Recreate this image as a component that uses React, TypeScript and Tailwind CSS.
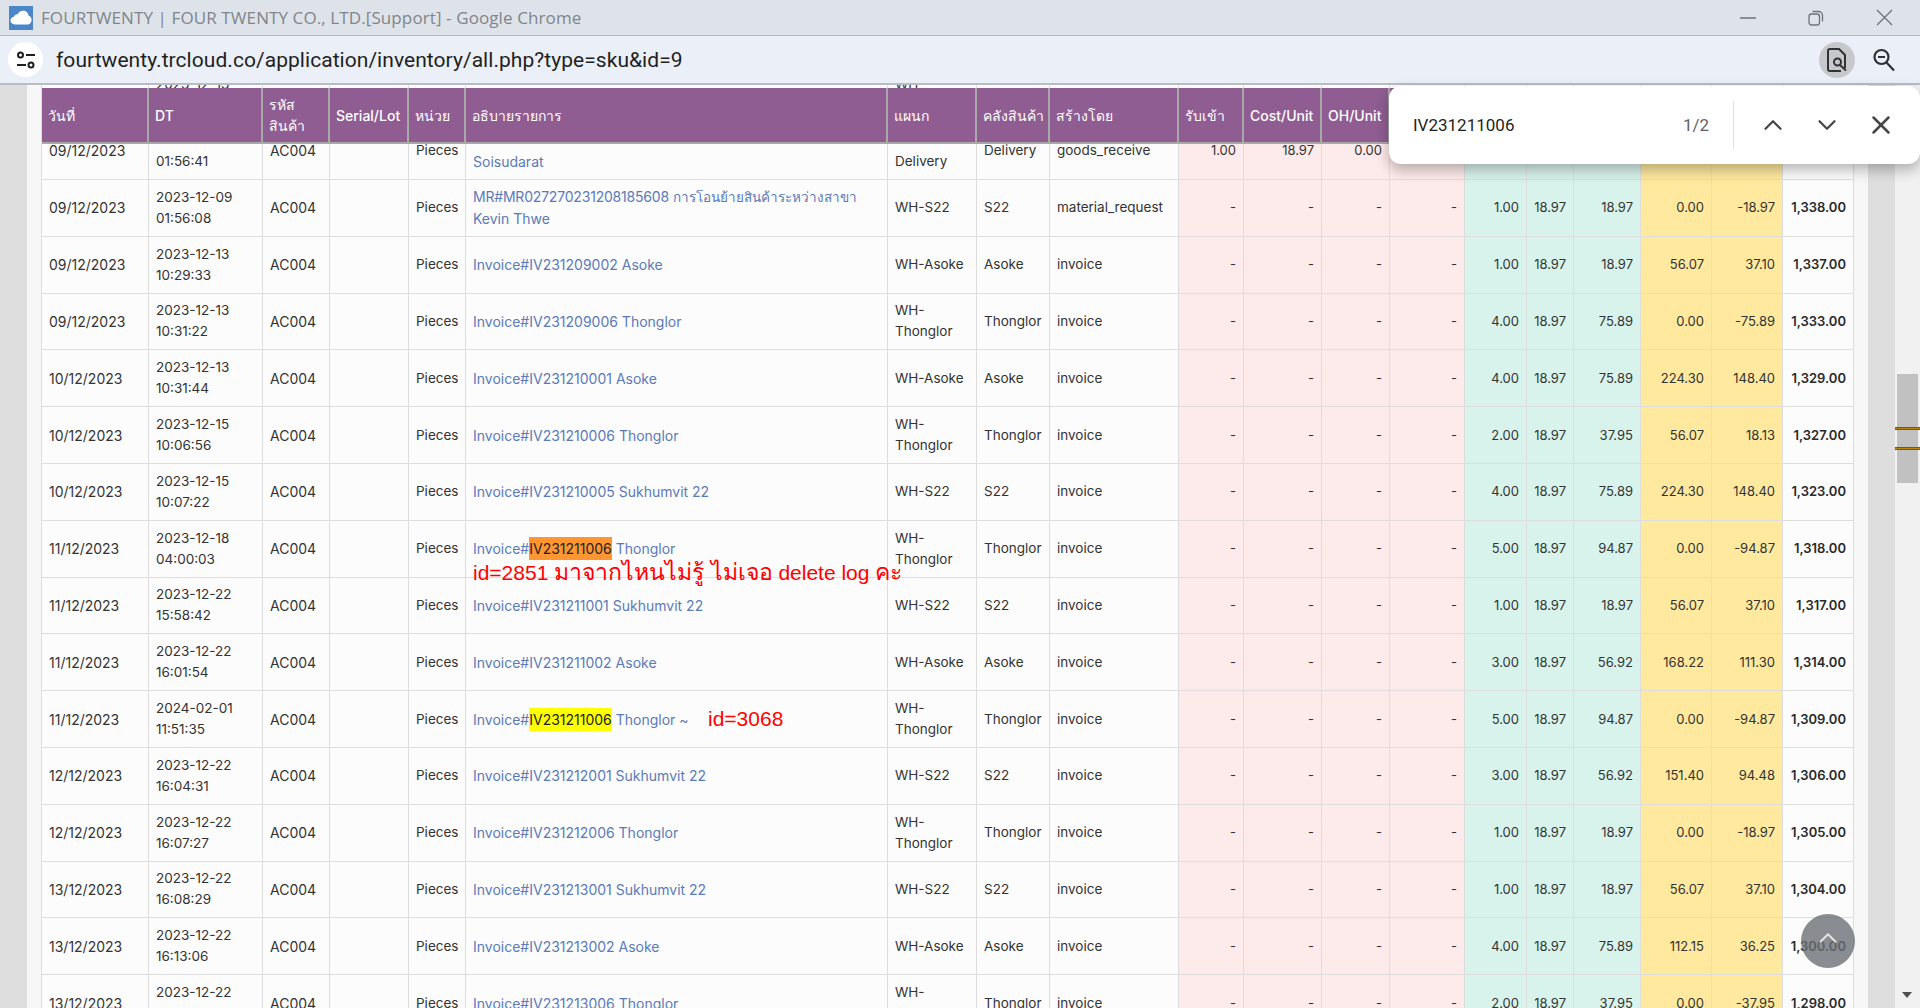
import { ChevronDown, ChevronUp, X } from 'lucide-react'

const gridCols =
  'grid grid-cols-[107px_114px_67px_79px_57px_422px_89px_73px_129px_65px_78px_68px_75px_62px_47px_67px_71px_71px_71px]'

type Row = {
  date: string
  dt: [string, string]
  desc: string
  dept: string
  wh: string
  by?: string
  nums: [string, string, string, string, string, string]
}

const rows: Row[] = [
  { date: '09/12/2023', dt: ['2023-12-09', '01:56:08'], desc: 'MR', dept: 'WH-S22', wh: 'S22', by: 'material_request', nums: ['1.00', '18.97', '18.97', '0.00', '-18.97', '1,338.00'] },
  { date: '09/12/2023', dt: ['2023-12-13', '10:29:33'], desc: 'Invoice#IV231209002 Asoke', dept: 'WH-Asoke', wh: 'Asoke', nums: ['1.00', '18.97', '18.97', '56.07', '37.10', '1,337.00'] },
  { date: '09/12/2023', dt: ['2023-12-13', '10:31:22'], desc: 'Invoice#IV231209006 Thonglor', dept: 'WH-Thonglor', wh: 'Thonglor', nums: ['4.00', '18.97', '75.89', '0.00', '-75.89', '1,333.00'] },
  { date: '10/12/2023', dt: ['2023-12-13', '10:31:44'], desc: 'Invoice#IV231210001 Asoke', dept: 'WH-Asoke', wh: 'Asoke', nums: ['4.00', '18.97', '75.89', '224.30', '148.40', '1,329.00'] },
  { date: '10/12/2023', dt: ['2023-12-15', '10:06:56'], desc: 'Invoice#IV231210006 Thonglor', dept: 'WH-Thonglor', wh: 'Thonglor', nums: ['2.00', '18.97', '37.95', '56.07', '18.13', '1,327.00'] },
  { date: '10/12/2023', dt: ['2023-12-15', '10:07:22'], desc: 'Invoice#IV231210005 Sukhumvit 22', dept: 'WH-S22', wh: 'S22', nums: ['4.00', '18.97', '75.89', '224.30', '148.40', '1,323.00'] },
  { date: '11/12/2023', dt: ['2023-12-18', '04:00:03'], desc: 'ORANGE', dept: 'WH-Thonglor', wh: 'Thonglor', nums: ['5.00', '18.97', '94.87', '0.00', '-94.87', '1,318.00'] },
  { date: '11/12/2023', dt: ['2023-12-22', '15:58:42'], desc: 'Invoice#IV231211001 Sukhumvit 22', dept: 'WH-S22', wh: 'S22', nums: ['1.00', '18.97', '18.97', '56.07', '37.10', '1,317.00'] },
  { date: '11/12/2023', dt: ['2023-12-22', '16:01:54'], desc: 'Invoice#IV231211002 Asoke', dept: 'WH-Asoke', wh: 'Asoke', nums: ['3.00', '18.97', '56.92', '168.22', '111.30', '1,314.00'] },
  { date: '11/12/2023', dt: ['2024-02-01', '11:51:35'], desc: 'YELLOW', dept: 'WH-Thonglor', wh: 'Thonglor', nums: ['5.00', '18.97', '94.87', '0.00', '-94.87', '1,309.00'] },
  { date: '12/12/2023', dt: ['2023-12-22', '16:04:31'], desc: 'Invoice#IV231212001 Sukhumvit 22', dept: 'WH-S22', wh: 'S22', nums: ['3.00', '18.97', '56.92', '151.40', '94.48', '1,306.00'] },
  { date: '12/12/2023', dt: ['2023-12-22', '16:07:27'], desc: 'Invoice#IV231212006 Thonglor', dept: 'WH-Thonglor', wh: 'Thonglor', nums: ['1.00', '18.97', '18.97', '0.00', '-18.97', '1,305.00'] },
  { date: '13/12/2023', dt: ['2023-12-22', '16:08:29'], desc: 'Invoice#IV231213001 Sukhumvit 22', dept: 'WH-S22', wh: 'S22', nums: ['1.00', '18.97', '18.97', '56.07', '37.10', '1,304.00'] },
  { date: '13/12/2023', dt: ['2023-12-22', '16:13:06'], desc: 'Invoice#IV231213002 Asoke', dept: 'WH-Asoke', wh: 'Asoke', nums: ['4.00', '18.97', '75.89', '112.15', '36.25', '1,300.00'] },
  { date: '13/12/2023', dt: ['2023-12-22', '16:14:20'], desc: 'Invoice#IV231213006 Thonglor', dept: 'WH-Thonglor', wh: 'Thonglor', nums: ['2.00', '18.97', '37.95', '0.00', '-37.95', '1,298.00'] },
]

function Cell({ children, className = '' }: { children?: React.ReactNode; className?: string }) {
  return (
    <div className={`relative flex items-center border-r border-b border-[#dddddd] px-[7px] ${className}`}>
      {children}
    </div>
  )
}

function Num({ children, className }: { children?: React.ReactNode; className: string }) {
  return <Cell className={`justify-end text-right text-[13px] ${className}`}>{children}</Cell>
}

function Desc({ desc }: { desc: string }) {
  if (desc === 'MR') {
    return (
      <div className="text-[#5b7ab8] text-[14px]">
        <div className="whitespace-nowrap">
          <span className="tracking-[-0.2px]">MR#MR027270231208185608</span>{' '}
          <span className="text-[13.5px]">การโอนย้ายสินค้าระหว่างสาขา</span>
        </div>
        <div>Kevin Thwe</div>
      </div>
    )
  }
  if (desc === 'ORANGE') {
    return (
      <>
        <div className="text-[#5b7ab8] text-[14px] whitespace-nowrap">
          Invoice#<span className="bg-[#ff9632] text-[#222222] py-[3px]">IV231211006</span> Thonglor
        </div>
        <div className="absolute left-[7px] top-[37px] z-10 whitespace-nowrap font-['Liberation_Sans','Noto_Sans',sans-serif] text-[21px] leading-[28px] text-[#ff0000]">
          id=2851 <span className="text-[23px]">มาจากไหนไม่รู้ ไม่เจอ</span> delete log{' '}
          <span className="text-[23px]">คะ</span>
        </div>
      </>
    )
  }
  if (desc === 'YELLOW') {
    return (
      <>
        <div className="text-[#5b7ab8] text-[14px] whitespace-nowrap">
          Invoice#<span className="bg-[#ffff00] text-[#222222] py-[3px]">IV231211006</span> Thonglor ~
        </div>
        <div className="absolute left-[242px] top-[14px] z-10 whitespace-nowrap font-['Liberation_Sans',sans-serif] text-[21px] leading-[28px] text-[#ff0000]">
          id=3068
        </div>
      </>
    )
  }
  return <div className="text-[#5b7ab8] text-[14px] whitespace-nowrap">{desc}</div>
}

function DataRow({ row }: { row: Row }) {
  return (
    <div className={`${gridCols} h-[56.8px] shrink-0`}>
      <Cell className="text-[14px]">{row.date}</Cell>
      <Cell>
        <div>
          <div>{row.dt[0]}</div>
          <div>{row.dt[1]}</div>
        </div>
      </Cell>
      <Cell className="text-[14px]">AC004</Cell>
      <Cell />
      <Cell>Pieces</Cell>
      <Cell>
        <Desc desc={row.desc} />
      </Cell>
      <Cell>{row.dept}</Cell>
      <Cell>{row.wh}</Cell>
      <Cell>{row.by ?? 'invoice'}</Cell>
      <Num className="bg-[#fdeaea]">-</Num>
      <Num className="bg-[#fdeaea]">-</Num>
      <Num className="bg-[#fdeaea]">-</Num>
      <Num className="bg-[#fdeaea]">-</Num>
      <Num className="bg-[#d8f3ec]">{row.nums[0]}</Num>
      <Num className="bg-[#d8f3ec]">{row.nums[1]}</Num>
      <Num className="bg-[#d8f3ec]">{row.nums[2]}</Num>
      <Num className="bg-[#fee99e]">{row.nums[3]}</Num>
      <Num className="bg-[#fee99e]">{row.nums[4]}</Num>
      <Num className="font-semibold text-[#2a2a2a]">{row.nums[5]}</Num>
    </div>
  )
}

function Th({ children }: { children?: React.ReactNode }) {
  return (
    <div className="flex items-center border-r-2 border-b-2 border-[#a8a8a8] px-[6px] text-[14px] font-medium text-white leading-[21px] whitespace-nowrap">
      {children}
    </div>
  )
}

function TitleBar() {
  return (
    <div className="h-[36px] shrink-0 flex items-center bg-[#dee3e9] border-b border-[#b4b7bb] pl-[9px]">
      <div className="w-[24px] h-[24px] bg-[#4a86c8] flex items-center justify-center">
        <svg width="22" height="15" viewBox="0 0 22 15" fill="white">
          <path d="M5 14.5C2.2 14.5.5 12.8.5 10.6c0-2 1.4-3.5 3.4-3.8C4.6 4.8 6 4 7.6 4.2 8.7 2 10.6.8 13 .8c3 0 5.3 2 5.6 5 1.900.5 3 2 3 3.900 0 2.700-1.900 4.800-4.500 4.800z" />
        </svg>
      </div>
      <div className="ml-[8px] text-[17px] text-[#80858b] font-['Open_Sans',sans-serif] tracking-[0.1px] whitespace-nowrap">
        FOURTWENTY | FOUR TWENTY CO., LTD.[Support] - Google Chrome
      </div>
      <div className="ml-auto flex items-center">
        <svg width="16" height="16" viewBox="0 0 16 16" className="mr-[52px] text-[#6f7275]" stroke="currentColor" strokeWidth="1.500" fill="none">
          <path d="M0 8h16" />
        </svg>
        <svg width="16" height="16" viewBox="0 0 16 16" className="mr-[52px] text-[#6f7275]" stroke="currentColor" strokeWidth="1.300" fill="none">
          <rect x="1" y="4" width="10.500" height="11" rx="2.500" />
          <path d="M4.500 1.500h6a4 4 0 0 1 4 4v6" />
        </svg>
        <svg width="17" height="17" viewBox="0 0 17 17" className="mr-[27px] text-[#6f7275]" stroke="currentColor" strokeWidth="1.300" fill="none">
          <path d="M1 1l15 15M16 1L1 16" />
        </svg>
      </div>
    </div>
  )
}

function AddressBar() {
  return (
    <div className="h-[49px] shrink-0 flex items-center bg-[#ebeff7] border-b-2 border-[#b9bcc0] pl-[8px]">
      <div className="w-[35px] h-[35px] rounded-full bg-white flex items-center justify-center">
        <svg width="20" height="18" viewBox="0 0 20 18" fill="none" stroke="#1f1f1f" strokeWidth="2">
          <circle cx="4.500" cy="4" r="2.500" />
          <path d="M10 4h9" />
          <circle cx="15" cy="14" r="2.500" />
          <path d="M1 14h9" />
        </svg>
      </div>
      <div className="ml-[13px] pt-[1px] text-[21px] tracking-[0.05px] text-[#1f1f1f] font-['Roboto',sans-serif] whitespace-nowrap">
        fourtwenty.trcloud.co/application/inventory/all.php?type=sku&amp;id=9
      </div>
      <div className="ml-auto flex items-center pr-[25px]">
        <div className="w-[36px] h-[36px] rounded-full bg-[#c6c8cb] flex items-center justify-center">
          <svg width="20" height="24" viewBox="0 0 20 24" fill="none" stroke="#2f3133" strokeWidth="2">
            <path d="M14 23H3a2 2 0 0 1-2-2V3a2 2 0 0 1 2-2h9l6 6v13" />
            <circle cx="10.500" cy="14" r="3.500" />
            <path d="M13 17l6 5.500" />
          </svg>
        </div>
        <svg width="22" height="24" viewBox="0 0 22 24" fill="none" stroke="#2f3133" strokeWidth="2.200" className="ml-[18px]">
          <circle cx="8.500" cy="9" r="7" />
          <path d="M5 9h7M13.500 14.500L21 22.500" />
        </svg>
      </div>
    </div>
  )
}

function FindBar() {
  return (
    <div className="absolute top-[86px] right-0 z-20 h-[78px] w-[531px] rounded-xl bg-white shadow-[0_6px_14px_rgba(0,0,0,0.28)] flex items-center pl-[24px] font-['Roboto',sans-serif]">
      <div className="w-[270px] text-[17px] text-[#1f1f1f]">IV231211006</div>
      <div className="w-[50px] text-[17px] text-[#5f6368]">1/2</div>
      <div className="h-[48px] w-px bg-[#d3e3fd]" />
      <div className="flex items-center ml-[24px] gap-[24px] text-[#444746]">
        <ChevronUp size={30} strokeWidth={1.800} />
        <ChevronDown size={30} strokeWidth={1.800} />
        <X size={30} strokeWidth={2} />
      </div>
    </div>
  )
}

// bottom of the row scrolled above the sticky header
function Sliver() {
  const texts: Record<number, string> = { 1: '2023-12-13', 6: 'WH-' }
  return (
    <div className={`${gridCols} h-[3px] shrink-0 overflow-hidden`}>
      {Array.from({ length: 19 }).map((_, i) => (
        <div key={i} className="flex items-end overflow-hidden border-r border-[#dddddd] px-[7px]">
          {texts[i] && <span className="-mb-[7px] shrink-0 whitespace-nowrap">{texts[i]}</span>}
        </div>
      ))}
    </div>
  )
}

export default function App() {
  return (
    <div className="relative h-screen w-full overflow-hidden flex flex-col bg-white font-['Inter','Noto_Sans',sans-serif] text-[13.5px] leading-[21px] text-[#333333]">
      <TitleBar />
      <AddressBar />
      <FindBar />

      <div className="flex flex-1 min-h-0 overflow-hidden">
        <div className="w-[27px] shrink-0 bg-[#dedede]" />
        <div className="w-[14px] shrink-0 bg-[#f7f7f7]" />

        <div className="w-[1813px] shrink-0 flex flex-col border-l border-[#dddddd] bg-[#fcfcfc]">
          <Sliver />

          <div className={`${gridCols} h-[56px] shrink-0 bg-[#8f5d91] relative z-[1]`}>
            <Th>วันที่</Th>
            <Th>DT</Th>
            <Th>
              <span>
                รหัส
                <br />
                สินค้า
              </span>
            </Th>
            <Th>Serial/Lot</Th>
            <Th>หน่วย</Th>
            <Th>อธิบายรายการ</Th>
            <Th>แผนก</Th>
            <Th>คลังสินค้า</Th>
            <Th>สร้างโดย</Th>
            <Th>รับเข้า</Th>
            <Th>Cost/Unit</Th>
            <Th>OH/Unit</Th>
            <Th />
            <Th />
            <Th />
            <Th />
            <Th />
            <Th />
            <Th />
          </div>

          {/* first row is partly hidden below the header */}
          <div className={`${gridCols} h-[36px] shrink-0`}>
            <Cell className="!items-start text-[14px]">
              <span className="-mt-[4px]">09/12/2023</span>
            </Cell>
            <Cell className="!items-end">
              <span className="pb-[7px]">01:56:41</span>
            </Cell>
            <Cell className="!items-start text-[14px]">
              <span className="-mt-[4px]">AC004</span>
            </Cell>
            <Cell />
            <Cell className="!items-start">
              <span className="-mt-[4px]">Pieces</span>
            </Cell>
            <Cell className="!items-end">
              <span className="pb-[7px] text-[14px] text-[#5b7ab8]">Soisudarat</span>
            </Cell>
            <Cell className="!items-end">
              <span className="pb-[7px]">Delivery</span>
            </Cell>
            <Cell className="!items-start">
              <span className="-mt-[4px]">Delivery</span>
            </Cell>
            <Cell className="!items-start">
              <span className="-mt-[4px]">goods_receive</span>
            </Cell>
            <Cell className="!items-start justify-end text-[13px] bg-[#fdeaea]">
              <span className="-mt-[4px]">1.00</span>
            </Cell>
            <Cell className="!items-start justify-end text-[13px] bg-[#fdeaea]">
              <span className="-mt-[4px]">18.97</span>
            </Cell>
            <Cell className="!items-start justify-end text-[13px] bg-[#fdeaea]">
              <span className="-mt-[4px]">0.00</span>
            </Cell>
            <Cell className="bg-[#fdeaea]" />
            <Cell className="bg-[#d8f3ec]" />
            <Cell className="bg-[#d8f3ec]" />
            <Cell className="bg-[#d8f3ec]" />
            <Cell className="bg-[#fee99e]" />
            <Cell className="bg-[#fee99e]" />
            <Cell />
          </div>

          {rows.map((row, i) => (
            <DataRow key={i} row={row} />
          ))}
        </div>

        <div className="w-[14px] shrink-0 bg-[#f7f7f7]" />
        <div className="w-[27px] shrink-0 bg-[#dedede]" />

        {/* scrollbar with the find markers */}
        <div className="relative flex-1 bg-[#f1f1f1] px-[2px]">
          <div className="mt-[289px] h-[109px] bg-[#c1c1c1]" />
          <div className="absolute left-0 right-0 top-[342px] h-[3px] bg-[#b8860b] border-y border-[#7a5c00]" />
          <div className="absolute left-0 right-0 top-[362px] h-[3px] bg-[#b8860b] border-y border-[#7a5c00]" />
          <div className="absolute left-[7px] bottom-[10px] border-x-[5px] border-x-transparent border-t-[6px] border-t-[#505050]" />
        </div>
      </div>

      {/* back to top */}
      <div className="absolute left-[1801px] top-[914px] z-20 w-[54px] h-[54px] rounded-full bg-[#6c7176]/80 flex items-center justify-center">
        <ChevronUp size={30} strokeWidth={1.500} className="text-[#e4e4e4] -mt-[6px]" />
      </div>
    </div>
  )
}
